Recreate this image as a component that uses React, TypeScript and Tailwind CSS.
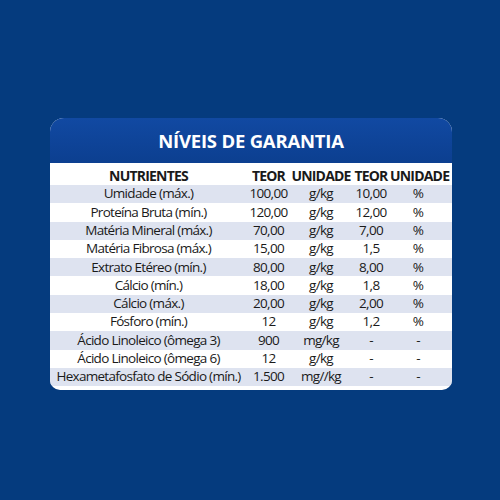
import React from "react";

const rows: [string, string, string, string, string][] = [
  ["Umidade (máx.)", "100,00", "g/kg", "10,00", "%"],
  ["Proteína Bruta (mín.)", "120,00", "g/kg", "12,00", "%"],
  ["Matéria Mineral (máx.)", "70,00", "g/kg", "7,00", "%"],
  ["Matéria Fibrosa (máx.)", "15,00", "g/kg", "1,5", "%"],
  ["Extrato Etéreo (mín.)", "80,00", "g/kg", "8,00", "%"],
  ["Cálcio (mín.)", "18,00", "g/kg", "1,8", "%"],
  ["Cálcio (máx.)", "20,00", "g/kg", "2,00", "%"],
  ["Fósforo (mín.)", "12", "g/kg", "1,2", "%"],
  ["Ácido Linoleico (ômega 3)", "900", "mg/kg", "-", "-"],
  ["Ácido Linoleico (ômega 6)", "12", "g/kg", "-", "-"],
  ["Hexametafosfato de Sódio (mín.)", "1.500", "mg//kg", "-", "-"],
];

const cols = "grid grid-cols-[197px_43px_62px_38px_56px_6px]";

export default function App() {
  return (
    <div className="w-[500px] h-[500px] bg-[#053b7e] pt-[118px] pl-[50px]" style={{ fontFamily: '"Open Sans", "Noto Sans", sans-serif' }}>
      <div className="w-[402px] bg-white rounded-t-[14px] rounded-b-[10px] overflow-hidden pb-[4px] text-[#1a1a1a]">
        <div className="h-[45px] bg-gradient-to-b from-[#1149a2] to-[#0c3f90] flex items-center justify-center text-white font-bold text-[18.5px] tracking-[-0.2px]">
          NÍVEIS DE GARANTIA
        </div>
        <div className={`${cols} h-[22px] items-center font-bold text-[14px] tracking-[-0.8px] text-center pt-[2px]`}>
          <div>NUTRIENTES</div>
          <div>TEOR</div>
          <div>UNIDADE</div>
          <div>TEOR</div>
          <div>UNIDADE</div>
        </div>
        {rows.map((r, i) => (
          <div
            key={i}
            className={`${cols} h-[18.3px] items-center text-center text-[13.5px] tracking-[-0.7px] leading-none ${i % 2 === 0 ? "bg-[#dee3f0]" : "bg-white"}`}
          >
            {r.map((c, j) => (
              <div key={j} className="whitespace-nowrap">{c}</div>
            ))}
          </div>
        ))}
      </div>
    </div>
  );
}
